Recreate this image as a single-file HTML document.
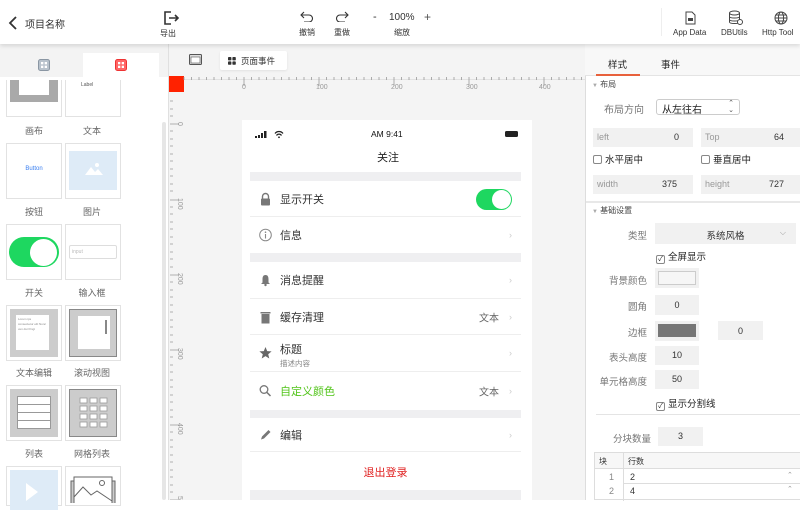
<!DOCTYPE html>
<html><head><meta charset="utf-8">
<style>
*{box-sizing:border-box;margin:0;padding:0}
body{width:800px;height:500px;overflow:hidden;position:relative;background:#fff;font-family:"Liberation Sans","Noto Sans CJK SC",sans-serif;color:#333}
.a{position:absolute}
.t{font-size:8px;color:#333;text-align:center;white-space:nowrap}
.lbl{position:absolute;font-size:9px;color:#666;text-align:center;width:56px}
.card{position:absolute;width:56px;height:56px;border:1px solid #e2e2e2;background:#fff}
.row{position:absolute;left:250px;width:271px;background:#fff;border-bottom:1px solid #eee;font-size:11px;color:#333}
.row .tx{position:absolute;left:30px;top:50%;transform:translateY(-50%)}
.row .ic{position:absolute;left:9px;top:50%;transform:translateY(-50%);width:13px;height:13px}
.chev{position:absolute;right:9px;top:50%;transform:translateY(-50%);color:#ccc;font-size:9px}
.rv{position:absolute;right:22px;top:50%;transform:translateY(-50%);color:#666;font-size:10px}
.in{position:absolute;background:#f1f1f1;font-size:9px;color:#333}
.pl{position:absolute;font-size:9.5px;color:#777;text-align:right;width:62px}
</style></head><body>
<!-- top bar -->
<div class="a" style="left:0;top:0;width:800px;height:44px;background:#fff;box-shadow:0 2px 4px rgba(0,0,0,.12);z-index:5">
 <svg class="a" style="left:8px;top:15px" width="10" height="16"><path d="M8 2 L2 8 L8 14" stroke="#333" stroke-width="1.8" fill="none"/></svg>
 <div class="a" style="left:25px;top:16px;font-size:10px;color:#333">项目名称</div>
 <svg class="a" style="left:163px;top:10px" width="18" height="16"><path d="M8 2H2V14H8" stroke="#333" stroke-width="1.6" fill="none"/><path d="M6 8H15M12 5L15 8L12 11" stroke="#333" stroke-width="1.6" fill="none"/></svg>
 <div class="a t" style="left:160px;top:28px">导出</div>
 <svg class="a" style="left:300px;top:10px" width="14" height="12"><path d="M4 2L1 5L4 8M1 5H9A3.5 3.5 0 0 1 9 12H4" stroke="#333" stroke-width="1.1" fill="none"/></svg>
 <div class="a t" style="left:299px;top:27px">撤销</div>
 <svg class="a" style="left:335px;top:10px" width="14" height="12"><path d="M10 2L13 5L10 8M13 5H5A3.5 3.5 0 0 0 5 12H10" stroke="#333" stroke-width="1.1" fill="none"/></svg>
 <div class="a t" style="left:334px;top:27px">重做</div>
 <div class="a" style="left:373px;top:11px;font-size:11px;color:#333">-</div>
 <div class="a" style="left:389px;top:12px;font-size:10px;color:#333">100%</div>
 <div class="a" style="left:424px;top:10px;font-size:12px;color:#555">+</div>
 <div class="a t" style="left:394px;top:27px">缩放</div>
 <div class="a" style="left:661px;top:8px;width:1px;height:28px;background:#eee"></div>
 <svg class="a" style="left:685px;top:11px" width="11" height="14"><path d="M1 1H7L10 4V13H1Z" stroke="#444" fill="none"/><rect x="3" y="7" width="5" height="3" fill="#444"/></svg>
 <div class="a t" style="left:673px;top:28px">App Data</div>
 <svg class="a" style="left:728px;top:10px" width="16" height="16"><ellipse cx="6.5" cy="3" rx="5" ry="2" stroke="#444" fill="none"/><path d="M1.5 3V12C1.5 14 11.5 14 11.5 12V3M1.5 6.5C1.5 8.5 11.5 8.5 11.5 6.5M1.5 9.5C1.5 11.5 11.5 11.5 11.5 9.5" stroke="#444" fill="none"/><circle cx="12" cy="12" r="2.5" stroke="#444" fill="#fff"/></svg>
 <div class="a t" style="left:721px;top:28px">DBUtils</div>
 <svg class="a" style="left:774px;top:11px" width="14" height="14"><circle cx="7" cy="7" r="6" stroke="#444" fill="none"/><ellipse cx="7" cy="7" rx="2.6" ry="6" stroke="#444" fill="none"/><path d="M1 7H13M2 4H12M2 10H12" stroke="#444"/></svg>
 <div class="a t" style="left:762px;top:28px">Http Tool</div>
</div>
<!-- left panel -->
<div class="a" style="left:0;top:44px;width:168px;height:456px;background:#fff">
 <div class="a" style="left:162px;top:78px;width:4px;height:378px;background:#e6e6e6;border-radius:2px"></div>
</div>
<!-- cards -->
<div class="card" style="left:6px;top:60px;height:57px;border-top:none"><div class="a" style="left:3px;top:0;width:48px;height:42px;background:#a9a9a9"></div><div class="a" style="left:12px;top:0;width:30px;height:35px;background:#fff"></div></div>
<div class="card" style="left:65px;top:60px;height:57px;border-top:none"><div class="a" style="left:15px;top:22px;font-size:5px;color:#555">Label</div></div>
<div class="lbl" style="left:6px;top:124px">画布</div><div class="lbl" style="left:64px;top:124px">文本</div>
<div class="card" style="left:6px;top:143px"><div class="a" style="left:0;top:22px;width:54px;text-align:center;font-size:6px;color:#3a7ff0">Button</div></div>
<div class="card" style="left:65px;top:143px"><div class="a" style="left:3px;top:7px;width:48px;height:39px;background:#deebf7"></div><svg class="a" style="left:19px;top:18px" width="18" height="14"><circle cx="12" cy="3" r="2" fill="#fff"/><path d="M0 13L6 5L10 10L13 7L18 13Z" fill="#fff"/></svg></div>
<div class="lbl" style="left:6px;top:205px">按钮</div><div class="lbl" style="left:64px;top:205px">图片</div>
<div class="card" style="left:6px;top:224px"><div class="a" style="left:2px;top:12px;width:50px;height:30px;border-radius:15px;background:#1ed760"></div><div class="a" style="left:23px;top:14px;width:27px;height:27px;border-radius:50%;background:#fff"></div></div>
<div class="card" style="left:65px;top:224px"><div class="a" style="left:3px;top:20px;width:48px;height:14px;border:1px solid #ddd;border-radius:2px;font-size:5px;color:#bbb;padding:3px 2px">input</div></div>
<div class="lbl" style="left:6px;top:286px">开关</div><div class="lbl" style="left:64px;top:286px">输入框</div>
<div class="card" style="left:6px;top:305px"><div class="a" style="left:3px;top:3px;width:48px;height:48px;background:#ccc"></div><div class="a" style="left:9px;top:9px;width:33px;height:35px;background:#fff;font-size:3px;color:#888;line-height:5px;padding:2px">Lorem ips consectetur elit Nunc ven dui fringi</div></div>
<div class="card" style="left:65px;top:305px"><div class="a" style="left:3px;top:3px;width:48px;height:48px;background:#ccc;border:1px solid #888"></div><div class="a" style="left:12px;top:10px;width:32px;height:33px;background:#fff"></div><div class="a" style="left:39px;top:14px;width:2px;height:14px;background:#888"></div></div>
<div class="lbl" style="left:6px;top:366px">文本编辑</div><div class="lbl" style="left:64px;top:366px">滚动视图</div>
<div class="card" style="left:6px;top:385px"><div class="a" style="left:3px;top:3px;width:48px;height:48px;background:#ccc"></div><div class="a" style="left:10px;top:10px;width:34px;height:33px;background:#fff;border:1px solid #999;background:repeating-linear-gradient(#fff 0 7px,#999 7px 8px)"></div></div>
<div class="card" style="left:65px;top:385px"><div class="a" style="left:3px;top:3px;width:48px;height:48px;background:#ccc;border:1px solid #888"></div><svg class="a" style="left:12px;top:10px" width="32" height="34"><g fill="#fff" stroke="#999" stroke-width=".8"><rect x="2" y="2" width="7" height="5"/><rect x="12" y="2" width="7" height="5"/><rect x="22" y="2" width="7" height="5"/><rect x="2" y="10" width="7" height="5"/><rect x="12" y="10" width="7" height="5"/><rect x="22" y="10" width="7" height="5"/><rect x="2" y="18" width="7" height="5"/><rect x="12" y="18" width="7" height="5"/><rect x="22" y="18" width="7" height="5"/><rect x="2" y="26" width="7" height="5"/><rect x="12" y="26" width="7" height="5"/><rect x="22" y="26" width="7" height="5"/></g></svg></div>
<div class="lbl" style="left:6px;top:447px">列表</div><div class="lbl" style="left:64px;top:447px">网格列表</div>
<div class="card" style="left:6px;top:466px;height:40px"><div class="a" style="left:3px;top:3px;width:48px;height:40px;background:#deebf7"></div><svg class="a" style="left:17px;top:16px" width="16" height="20"><path d="M2 0L14 9L2 18Z" fill="#fff"/></svg></div>
<div class="card" style="left:65px;top:466px;height:40px"><svg class="a" style="left:3px;top:6px" width="48" height="30"><rect x="5" y="4" width="38" height="28" fill="#fff" stroke="#666"/><rect x="2" y="8" width="3" height="24" fill="#ccc" stroke="#666"/><rect x="43" y="8" width="3" height="24" fill="#ccc" stroke="#666"/><circle cx="33" cy="10" r="2.5" fill="none" stroke="#666"/><path d="M5 24L14 14L22 22L28 18L43 28" fill="none" stroke="#666"/></svg></div>
<!-- left tabs (over cards) -->
<div class="a" style="left:0;top:44px;width:168px;height:33px;background:#f3f3f3;z-index:3">
 <div class="a" style="left:83px;top:9px;width:76px;height:24px;background:#fff"></div>
 <svg class="a" style="left:38px;top:15px" width="12" height="12"><rect x=".5" y=".5" width="11" height="11" rx="2" fill="#b8c2cc" stroke="#8a96a3"/><rect x="3" y="3" width="2.3" height="2.3" fill="#fff"/><rect x="6.7" y="3" width="2.3" height="2.3" fill="#fff"/><rect x="3" y="6.7" width="2.3" height="2.3" fill="#fff"/><rect x="6.7" y="6.7" width="2.3" height="2.3" fill="#fff"/></svg>
 <svg class="a" style="left:115px;top:15px" width="12" height="12"><rect x=".5" y=".5" width="11" height="11" rx="2" fill="#f66" stroke="#e33"/><rect x="3" y="3" width="2.3" height="2.3" fill="#fff"/><rect x="6.7" y="3" width="2.3" height="2.3" fill="#fff"/><rect x="3" y="6.7" width="2.3" height="2.3" fill="#fff"/><rect x="6.7" y="6.7" width="2.3" height="2.3" fill="#fff"/></svg>
</div>
<div class="a" style="left:0;top:77px;width:168px;height:3px;background:#fff;z-index:3"></div>
<!-- canvas -->
<div class="a" style="left:168px;top:44px;width:417px;height:456px;background:#f4f4f4;border-left:1px solid #e0e0e0"></div>
<svg class="a" style="left:189px;top:54px" width="13" height="11"><rect x=".5" y=".5" width="12" height="10" rx="1" fill="#ddd" stroke="#555"/><rect x="2" y="3" width="9" height="6" fill="#fff" stroke="#555" stroke-width=".6"/></svg>
<div class="a" style="left:220px;top:51px;width:67px;height:19px;background:#fff;border-radius:2px;box-shadow:0 1px 2px rgba(0,0,0,.08)">
 <svg class="a" style="left:8px;top:6px" width="8" height="8"><rect x="0" y="0" width="3.4" height="3.4" rx=".8" fill="#333"/><rect x="4.4" y="0" width="3.4" height="3.4" rx=".8" fill="#333"/><rect x="0" y="4.4" width="3.4" height="3.4" rx=".8" fill="#333"/><rect x="4.4" y="4.4" width="3.4" height="3.4" rx=".8" fill="#333"/></svg>
 <div class="a" style="left:21px;top:4px;font-size:8.5px;color:#333">页面事件</div>
</div>
<svg class="a" style="left:169px;top:76px" width="416" height="424">
 <rect x="0" y="0" width="15" height="16" fill="#ff2200"/>
 <path d="M15 3.5H416" stroke="#ddd" stroke-width=".8"/>
 <g font-size="7" fill="#999" font-family="Liberation Sans">
  <text x="73" y="13">0</text><text x="147" y="13">100</text><text x="222" y="13">200</text><text x="297" y="13">300</text><text x="370" y="13">400</text>
  <text transform="translate(9,46) rotate(90)">0</text>
  <text transform="translate(9,122) rotate(90)">100</text>
  <text transform="translate(9,197) rotate(90)">200</text>
  <text transform="translate(9,272) rotate(90)">300</text>
  <text transform="translate(9,347) rotate(90)">400</text>
  <text transform="translate(9,420) rotate(90)">500</text>
 </g>
 <path d="M75 1V10M150 1V10M225 1V10M300 1V10M375 1V10M1 48H10M1 124H10M1 199H10M1 274H10M1 349H10M1 424H10" stroke="#999" stroke-width=".8"/>
 <path d="M15 1v3M22.5 1v3M30 1v3M37.5 1v3M45 1v3M52.5 1v3M60 1v3M67.5 1v3M82.5 1v3M90 1v3M97.5 1v3M105 1v3M112.5 1v3M120 1v3M127.5 1v3M135 1v3M142.5 1v3M157.5 1v3M165 1v3M172.5 1v3M180 1v3M187.5 1v3M195 1v3M202.5 1v3M210 1v3M217.5 1v3M232.5 1v3M240 1v3M247.5 1v3M255 1v3M262.5 1v3M270 1v3M277.5 1v3M285 1v3M292.5 1v3M307.5 1v3M315 1v3M322.5 1v3M330 1v3M337.5 1v3M345 1v3M352.5 1v3M360 1v3M367.5 1v3M382.5 1v3M390 1v3M397.5 1v3M405 1v3M412.5 1v3" stroke="#999" stroke-width=".8"/>
 <path d="M1 25h3M1 33h3M1 40h3M1 55h3M1 63h3M1 70h3M1 78h3M1 85h3M1 93h3M1 100h3M1 108h3M1 115h3M1 131h3M1 138h3M1 146h3M1 153h3M1 161h3M1 168h3M1 176h3M1 183h3M1 191h3M1 206h3M1 214h3M1 221h3M1 229h3M1 236h3M1 244h3M1 251h3M1 259h3M1 266h3M1 281h3M1 289h3M1 296h3M1 304h3M1 311h3M1 319h3M1 326h3M1 334h3M1 341h3M1 356h3M1 364h3M1 371h3M1 379h3M1 386h3M1 394h3M1 401h3M1 409h3M1 416h3" stroke="#999" stroke-width=".8"/>
</svg>
<!-- phone -->
<div class="a" style="left:242px;top:120px;width:290px;height:380px;background:#fff"></div>
<svg class="a" style="left:255px;top:130px" width="36" height="9"><rect x="0" y="6" width="2" height="2" fill="#222"/><rect x="3" y="5" width="2" height="3" fill="#222"/><rect x="6" y="3" width="2" height="5" fill="#222"/><rect x="9" y="1" width="2.5" height="7" fill="#222"/><path d="M20 3.5A5 5 0 0 1 28 3.5M21.5 5.5A3 3 0 0 1 26.5 5.5" stroke="#222" stroke-width="1.2" fill="none"/><circle cx="24" cy="7.3" r=".9" fill="#222"/></svg>
<div class="a" style="left:371px;top:129px;font-size:8.5px;color:#111">AM 9:41</div>
<div class="a" style="left:505px;top:131px;width:13px;height:6px;border-radius:1.5px;background:#222"></div>
<div class="a" style="left:377px;top:149px;font-size:11px;color:#222">关注</div>
<div class="a" style="left:250px;top:172px;width:271px;height:328px;background:#efeff1"></div>
<div class="row" style="top:181px;height:36px"><svg class="ic" viewBox="0 0 13 13"><path d="M3.5 6V4A3 3 0 0 1 9.5 4V6" stroke="#777" stroke-width="1.4" fill="none"/><rect x="2" y="6" width="9" height="7" rx="1" fill="#777"/></svg><span class="tx">显示开关</span><div class="a" style="right:9px;top:8px;width:36px;height:21px;border-radius:11px;background:#1ed760"></div><div class="a" style="right:10px;top:9px;width:19px;height:19px;border-radius:50%;background:#fff"></div></div>
<div class="row" style="top:217px;height:36px;border:none"><svg class="ic" viewBox="0 0 13 13"><circle cx="6.5" cy="6.5" r="5.8" stroke="#888" fill="none"/><path d="M6.5 5.5V10" stroke="#888" stroke-width="1.1"/><circle cx="6.5" cy="3.7" r=".8" fill="#888"/></svg><span class="tx">信息</span><span class="chev">›</span></div>
<div class="row" style="top:262px;height:37px"><svg class="ic" viewBox="0 0 13 13"><path d="M6.5 1.5C4 1.5 3.5 3.5 3.5 6V9L2 10.5H11L9.5 9V6C9.5 3.5 9 1.5 6.5 1.5Z" fill="#777"/><circle cx="6.5" cy="11.5" r="1.2" fill="#777"/></svg><span class="tx">消息提醒</span><span class="chev">›</span></div>
<div class="row" style="top:299px;height:36px"><svg class="ic" viewBox="0 0 13 13" style="height:15px"><rect x="1.5" y="1.5" width="10" height="1.5" fill="#777"/><rect x="2.5" y="3.5" width="8" height="9.5" fill="#777"/></svg><span class="tx">缓存清理</span><span class="rv">文本</span><span class="chev">›</span></div>
<div class="row" style="top:335px;height:37px"><svg class="ic" viewBox="0 0 13 13"><path d="M6.5 0.5L8.2 4.6L12.6 4.9L9.2 7.7L10.3 12L6.5 9.6L2.7 12L3.8 7.7L0.4 4.9L4.8 4.6Z" fill="#666"/></svg><span class="a" style="left:30px;top:6px">标题</span><span class="a" style="left:30px;top:23px;font-size:7.5px;color:#888">描述内容</span><span class="chev">›</span></div>
<div class="row" style="top:372px;height:38px;border:none"><svg class="ic" viewBox="0 0 13 13"><circle cx="5" cy="5" r="3.8" stroke="#777" stroke-width="1.3" fill="none"/><path d="M7.8 7.8L11.5 11.5" stroke="#777" stroke-width="1.5"/></svg><span class="tx" style="color:#52c41a">自定义颜色</span><span class="rv">文本</span><span class="chev">›</span></div>
<div class="row" style="top:418px;height:34px"><svg class="ic" viewBox="0 0 13 13"><path d="M2 11L3 8L9.5 1.5L11.5 3.5L5 10Z" fill="#777"/></svg><span class="tx">编辑</span><span class="chev">›</span></div>
<div class="row" style="top:452px;height:38px;border:none"><span class="a" style="left:0;width:271px;text-align:center;top:12px;color:#e02020;font-size:11px">退出登录</span></div>
<!-- right panel -->
<div class="a" style="left:585px;top:44px;width:215px;height:456px;background:#fff;border-left:1px solid #ddd"></div>
<div class="a" style="left:585px;top:44px;width:215px;height:32px;background:#f8f8f8;border-bottom:1px solid #e4e4e4"></div>
<div class="a" style="left:608px;top:57px;font-size:9.5px;color:#222">样式</div>
<div class="a" style="left:661px;top:57px;font-size:9.5px;color:#222">事件</div>
<div class="a" style="left:596px;top:74px;width:44px;height:2px;background:#e8613c"></div>
<div class="a" style="left:592px;top:79px;font-size:8px;color:#444"><span style="color:#aaa;font-size:6px">▼</span> 布局</div>
<div class="a" style="left:604px;top:101px;font-size:10px;color:#777">布局方向</div>
<div class="a" style="left:656px;top:99px;width:84px;height:16px;border:1px solid #ccc;border-radius:3px;font-size:10px;color:#222;padding:1px 0 0 5px">从左往右<span style="position:absolute;right:5px;top:0;font-size:7px;color:#555;line-height:7px">⌃<br>⌄</span></div>
<div class="in" style="left:593px;top:128px;width:100px;height:19px;padding:4px 4px;color:#999">left<span style="position:absolute;right:14px;color:#333">0</span></div>
<div class="in" style="left:701px;top:128px;width:99px;height:19px;padding:4px 4px;color:#999">Top<span style="position:absolute;right:16px;color:#333">64</span></div>
<div class="a" style="left:593px;top:152px;font-size:9.5px;color:#222"><span style="display:inline-block;width:9px;height:9px;border:1px solid #888;border-radius:2px;vertical-align:-1px;margin-right:3px"></span>水平居中</div>
<div class="a" style="left:701px;top:152px;font-size:9.5px;color:#222"><span style="display:inline-block;width:9px;height:9px;border:1px solid #888;border-radius:2px;vertical-align:-1px;margin-right:3px"></span>垂直居中</div>
<div class="in" style="left:593px;top:175px;width:100px;height:19px;padding:4px 4px;color:#999">width<span style="position:absolute;right:16px;color:#333">375</span></div>
<div class="in" style="left:701px;top:175px;width:99px;height:19px;padding:4px 4px;color:#999">height<span style="position:absolute;right:16px;color:#333">727</span></div>
<div class="a" style="left:586px;top:201px;width:214px;height:2px;background:#e8e8e8"></div>
<div class="a" style="left:592px;top:205px;font-size:8px;color:#444"><span style="color:#aaa;font-size:6px">▼</span> 基础设置</div>
<div class="pl" style="left:585px;top:228px">类型</div>
<div class="in" style="left:655px;top:223px;width:141px;height:21px;text-align:center;padding-top:5px;font-size:9.5px">系统风格<span style="position:absolute;right:10px;color:#999;font-size:8px">⌵</span></div>
<div class="a" style="left:656px;top:249px;font-size:9.5px;color:#222"><span style="display:inline-block;width:9px;height:9px;border:1px solid #888;border-radius:2px;vertical-align:-1px;margin-right:3px;font-size:7px;line-height:7px;text-align:center">✓</span>全屏显示</div>
<div class="pl" style="left:585px;top:273px">背景颜色</div>
<div class="in" style="left:655px;top:268px;width:44px;height:20px"><div class="a" style="left:3px;top:3px;width:38px;height:14px;border:1px solid #ccc;background:#f6f6f6"></div></div>
<div class="pl" style="left:585px;top:299px">圆角</div>
<div class="in" style="left:655px;top:295px;width:44px;height:20px;text-align:center;padding-top:5px">0</div>
<div class="pl" style="left:585px;top:325px">边框</div>
<div class="in" style="left:655px;top:321px;width:44px;height:20px"><div class="a" style="left:3px;top:3px;width:38px;height:13px;background:#777"></div></div>
<div class="in" style="left:718px;top:321px;width:45px;height:19px;text-align:center;padding-top:5px">0</div>
<div class="pl" style="left:585px;top:350px">表头高度</div>
<div class="in" style="left:655px;top:346px;width:44px;height:19px;text-align:center;padding-top:4px">10</div>
<div class="pl" style="left:585px;top:374px">单元格高度</div>
<div class="in" style="left:655px;top:370px;width:44px;height:19px;text-align:center;padding-top:4px">50</div>
<div class="a" style="left:656px;top:396px;font-size:9.5px;color:#222"><span style="display:inline-block;width:9px;height:9px;border:1px solid #888;border-radius:2px;vertical-align:-1px;margin-right:3px;font-size:7px;line-height:7px;text-align:center">✓</span>显示分割线</div>
<div class="a" style="left:596px;top:414px;width:204px;height:1px;background:#e4e4e4"></div>
<div class="pl" style="left:589px;top:431px">分块数量</div>
<div class="in" style="left:658px;top:427px;width:45px;height:19px;text-align:center;padding-top:4px">3</div>
<div class="a" style="left:594px;top:452px;width:206px;height:48px;border:1px solid #ddd;border-right:none">
 <div class="a" style="left:0;top:0;width:206px;height:16px;background:#f7f7f7;border-bottom:1px solid #ddd;font-size:8px;color:#333"><span class="a" style="left:4px;top:3px">块</span><span class="a" style="left:33px;top:3px">行数</span></div>
 <div class="a" style="left:28px;top:0;width:1px;height:48px;background:#ddd"></div>
 <div class="a" style="left:0;top:17px;width:206px;font-size:9px"><span class="a" style="left:14px;top:2px;color:#888">1</span><span class="a" style="left:35px;top:2px">2</span><span class="a" style="left:192px;top:1px;color:#999;font-size:7px">⌃</span></div>
 <div class="a" style="left:28px;top:30px;width:178px;height:1px;background:#ddd"></div>
 <div class="a" style="left:0;top:31px;width:206px;font-size:9px"><span class="a" style="left:14px;top:2px;color:#888">2</span><span class="a" style="left:35px;top:2px">4</span><span class="a" style="left:192px;top:1px;color:#999;font-size:7px">⌃</span></div>
</div>
</body></html>
